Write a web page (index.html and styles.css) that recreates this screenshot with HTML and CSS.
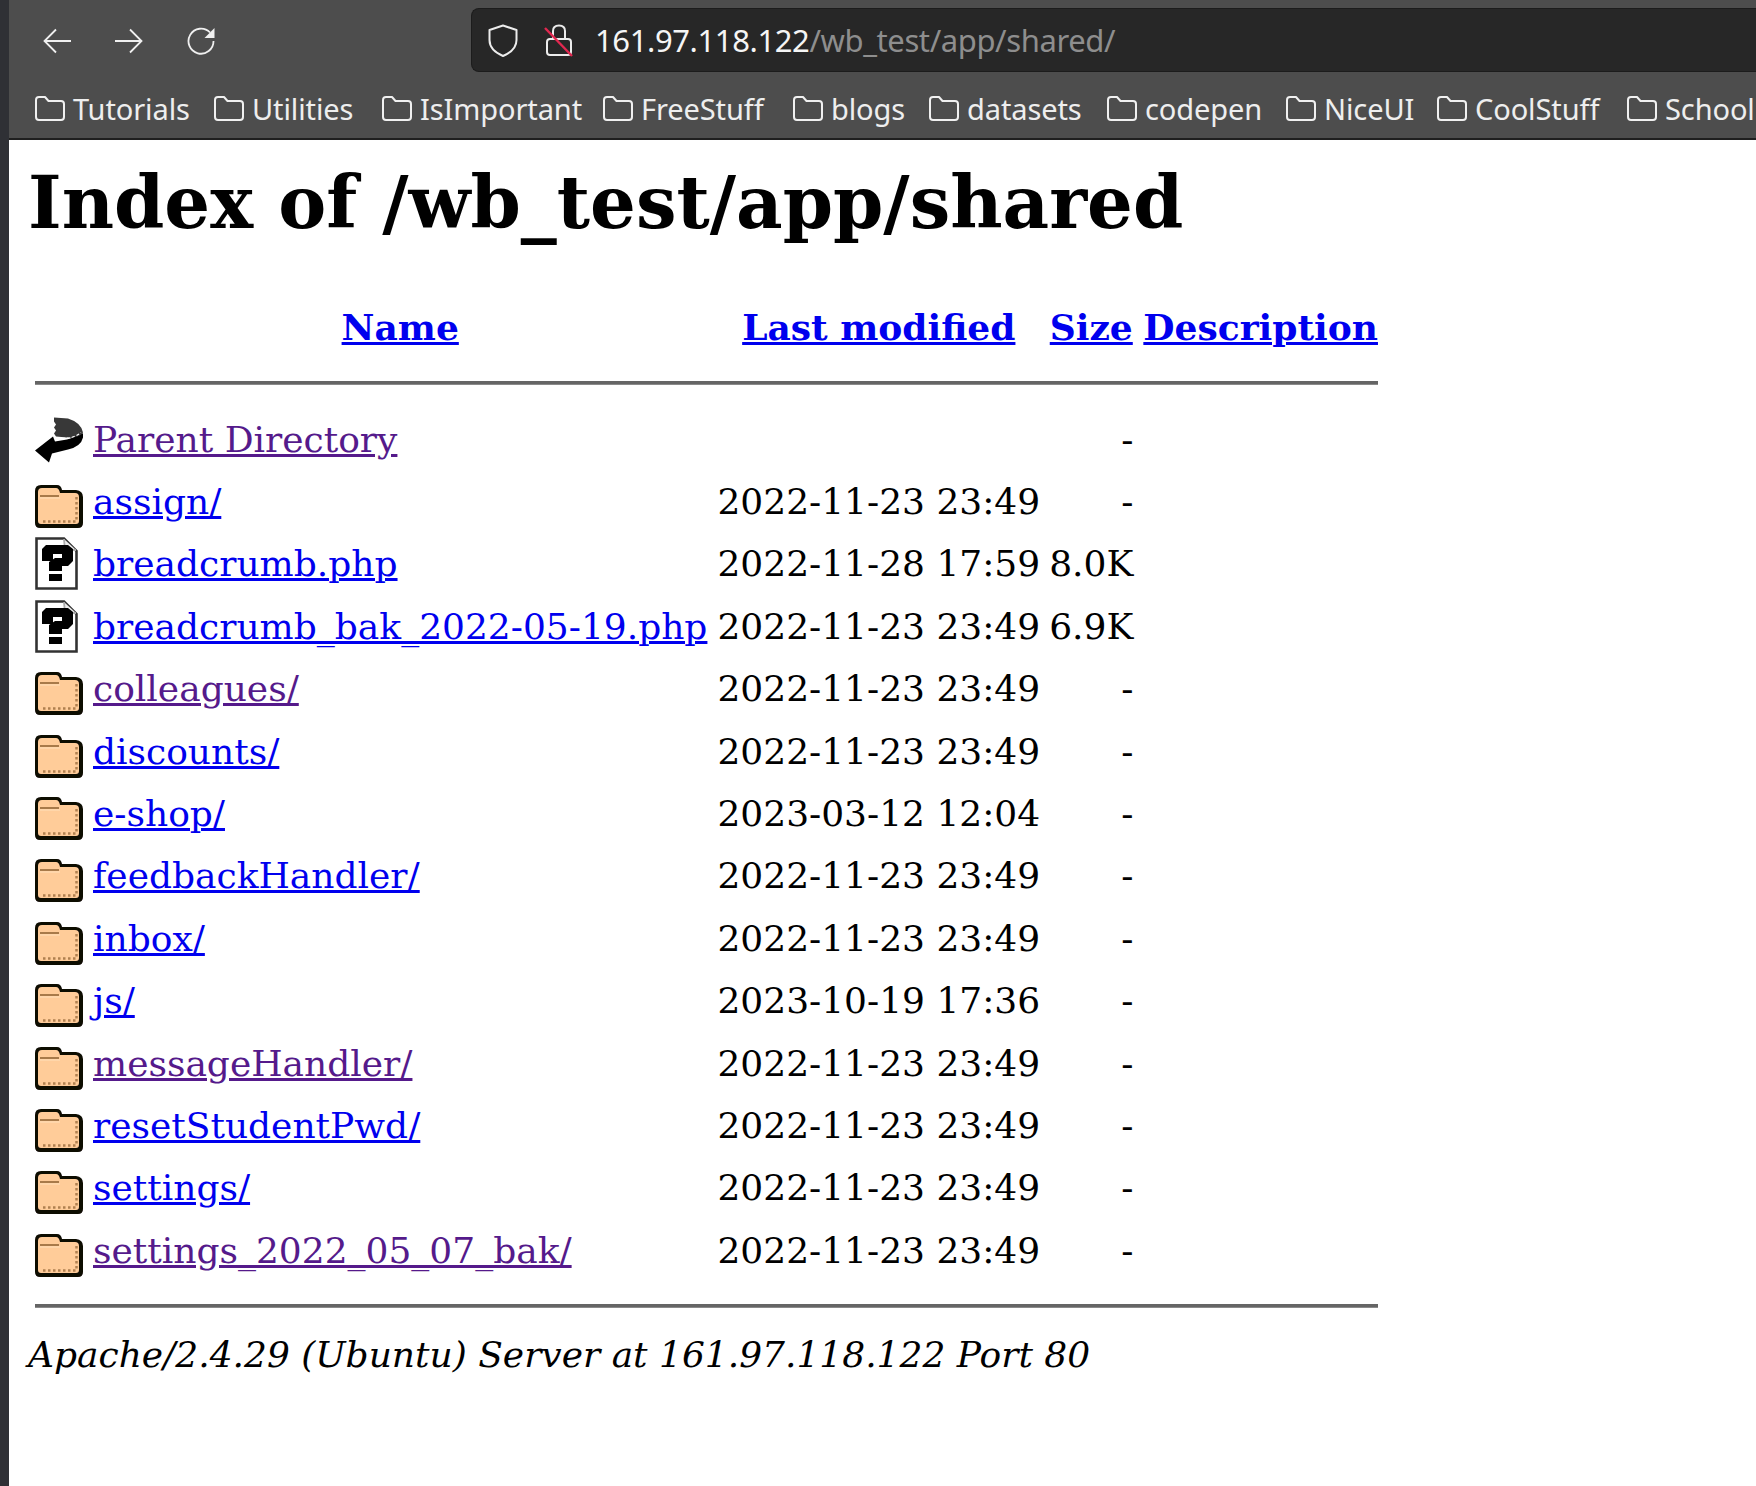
FILE: index.html
```html
<!DOCTYPE html>
<html lang="en">
<head>
<meta charset="utf-8">
<title>Index of /wb_test/app/shared</title>
<link rel="stylesheet" href="styles.css">
</head>
<body>
<svg class="defs" width="0" height="0" aria-hidden="true">
  <defs>
    <filter id="soft" x="-5%" y="-5%" width="110%" height="110%"><feGaussianBlur stdDeviation="0.5"/></filter>
    <symbol id="bm" viewBox="0 0 30 25"><path d="M1 4C1 2 2 1 4 1H10L13.500 5H26C28 5 29 6 29 8V21C29 23 28 24 26 24H4C2 24 1 23 1 21Z" fill="none" stroke="#f0f0f0" stroke-width="2" stroke-linejoin="round"/></symbol>
    <symbol id="folder" viewBox="0 0 48 43" preserveAspectRatio="xMidYMax meet">
      <g filter="url(#soft)">
        <path d="M0 6Q0 0 6 0H22Q26 0 27 5H41Q48 6 48 12V38Q48 43 43 43H5Q0 43 0 38Z" fill="#0c0806"/>
        <path d="M3 7Q3 3 7 3H21Q24 3 25 8H40Q44 8 44 12V36Q44 39 41 39H6Q3 39 3 36Z" fill="#ffcc99"/>
        <path d="M5 11H24" stroke="#a87a48" stroke-width="2"/>
        <path d="M5 13H25" stroke="#ffe0bb" stroke-width="1"/>
        <path d="M8 36.500H42" stroke="#b08050" stroke-width="2.500" stroke-dasharray="2.500 2.500"/>
        <path d="M41.500 12V36" stroke="#b08050" stroke-width="2.500" stroke-dasharray="2.500 2.500"/>
      </g>
    </symbol>
    <symbol id="unknown" viewBox="0 0 43 53" preserveAspectRatio="xMinYMid meet">
      <g filter="url(#soft)">
        <path d="M1.500 1.500H29L41.500 14V51.500H1.500Z" fill="#fff" stroke="#333" stroke-width="2.600"/>
        <path d="M29 2L30 13H41" fill="#eee" stroke="#aaa" stroke-width="1.800"/>
        <path d="M7 12L11 8H33L38 12V24L33 29H27V34H14V25L20 21H27V17H18V24H7Z" fill="#000"/>
        <rect x="14" y="37" width="13" height="7" fill="#000"/>
      </g>
    </symbol>
    <symbol id="back" viewBox="0 0 48 48">
      <g filter="url(#soft)">
        <path d="M0 35L18 21L20 26L32 24Q41 22 44 17L48 18V22Q46 31 33 34L17 38L14 47Z" fill="#000"/>
        <path d="M19 2L33 3Q46 7 48 17Q44 23 32 22L21 21L19 18L21 15L19 12L21 9L19 6Z" fill="#383838"/>
        <path d="M22 22Q36 25 46 17" fill="none" stroke="#fff" stroke-width="1.200" stroke-dasharray="3 2"/>
      </g>
    </symbol>
  </defs>
</svg>
<div class="window">
  <div class="edge"></div>
  <div class="main">
    <header class="chrome">
      <div class="toolbar">
        <div class="navs">
          <svg class="nav" viewBox="0 0 28 28"><path d="M28 14H2M13 2.500L1.500 14L13 25.500" fill="none" stroke="#f0f0f0" stroke-width="1.800"/></svg>
          <svg class="nav" viewBox="0 0 28 28"><path d="M0 14H26M15 2.500L26.500 14L15 25.500" fill="none" stroke="#f0f0f0" stroke-width="1.800"/></svg>
          <svg class="nav" viewBox="0 0 28 28"><path d="M23 5.500A12.500 12.500 0 1 0 26.500 14" fill="none" stroke="#f0f0f0" stroke-width="1.800"/><path d="M27.500 1V11H17.500Z" fill="#f0f0f0"/></svg>
        </div>
        <div class="urlbar">
          <svg class="shield" viewBox="0 0 30 33"><path d="M15 1.500L28.500 6V16C28.500 24 22 29 15 32C8 29 1.500 24 1.500 16V6Z" fill="none" stroke="#ececec" stroke-width="2" stroke-linejoin="round"/></svg>
          <svg class="lock" viewBox="0 0 30 33"><path d="M9 15V7C9 3 11.500 1.500 15 1.500S21 3 21 7V15" fill="none" stroke="#ececec" stroke-width="2"/><rect x="3" y="15" width="24" height="16" rx="3" fill="none" stroke="#ececec" stroke-width="2"/><path d="M1 4L28 32" stroke="#e22850" stroke-width="2.400"/></svg>
          <span class="url"><span class="host">161.97.118.122</span>/wb_test/app/shared/</span>
        </div>
      </div>
      <nav class="bookmarks">
        <span class="bm"><svg><use href="#bm"/></svg>Tutorials</span>
        <span class="bm"><svg><use href="#bm"/></svg>Utilities</span>
        <span class="bm"><svg><use href="#bm"/></svg>IsImportant</span>
        <span class="bm"><svg><use href="#bm"/></svg>FreeStuff</span>
        <span class="bm"><svg><use href="#bm"/></svg>blogs</span>
        <span class="bm"><svg><use href="#bm"/></svg>datasets</span>
        <span class="bm"><svg><use href="#bm"/></svg>codepen</span>
        <span class="bm"><svg><use href="#bm"/></svg>NiceUI</span>
        <span class="bm"><svg><use href="#bm"/></svg>CoolStuff</span>
        <span class="bm"><svg><use href="#bm"/></svg>School</span>
      </nav>
    </header>
    <main class="page">
      <h1>Index of /wb_test/app/shared</h1>
      <table>
        <tr class="head"><th class="ic"></th><th><a href="#">Name</a></th><th><a href="#">Last modified</a></th><th><a href="#">Size</a></th><th><a href="#">Description</a></th></tr>
        <tr><th colspan="5" class="rule"><hr></th></tr>
        <tr><td class="ic"><svg class="i"><use href="#back"/></svg></td><td><a class="v" href="#">Parent Directory</a></td><td></td><td class="r">-</td><td></td></tr>
        <tr><td class="ic"><svg class="i"><use href="#folder"/></svg></td><td><a href="#">assign/</a></td><td>2022-11-23 23:49</td><td class="r">-</td><td></td></tr>
        <tr><td class="ic"><svg class="i"><use href="#unknown"/></svg></td><td><a href="#">breadcrumb.php</a></td><td>2022-11-28 17:59</td><td class="r">8.0K</td><td></td></tr>
        <tr><td class="ic"><svg class="i"><use href="#unknown"/></svg></td><td><a href="#">breadcrumb_bak_2022-05-19.php</a></td><td>2022-11-23 23:49</td><td class="r">6.9K</td><td></td></tr>
        <tr><td class="ic"><svg class="i"><use href="#folder"/></svg></td><td><a class="v" href="#">colleagues/</a></td><td>2022-11-23 23:49</td><td class="r">-</td><td></td></tr>
        <tr><td class="ic"><svg class="i"><use href="#folder"/></svg></td><td><a href="#">discounts/</a></td><td>2022-11-23 23:49</td><td class="r">-</td><td></td></tr>
        <tr><td class="ic"><svg class="i"><use href="#folder"/></svg></td><td><a href="#">e-shop/</a></td><td>2023-03-12 12:04</td><td class="r">-</td><td></td></tr>
        <tr><td class="ic"><svg class="i"><use href="#folder"/></svg></td><td><a href="#">feedbackHandler/</a></td><td>2022-11-23 23:49</td><td class="r">-</td><td></td></tr>
        <tr><td class="ic"><svg class="i"><use href="#folder"/></svg></td><td><a href="#">inbox/</a></td><td>2022-11-23 23:49</td><td class="r">-</td><td></td></tr>
        <tr><td class="ic"><svg class="i"><use href="#folder"/></svg></td><td><a href="#">js/</a></td><td>2023-10-19 17:36</td><td class="r">-</td><td></td></tr>
        <tr><td class="ic"><svg class="i"><use href="#folder"/></svg></td><td><a class="v" href="#">messageHandler/</a></td><td>2022-11-23 23:49</td><td class="r">-</td><td></td></tr>
        <tr><td class="ic"><svg class="i"><use href="#folder"/></svg></td><td><a href="#">resetStudentPwd/</a></td><td>2022-11-23 23:49</td><td class="r">-</td><td></td></tr>
        <tr><td class="ic"><svg class="i"><use href="#folder"/></svg></td><td><a href="#">settings/</a></td><td>2022-11-23 23:49</td><td class="r">-</td><td></td></tr>
        <tr><td class="ic"><svg class="i"><use href="#folder"/></svg></td><td><a class="v" href="#">settings_2022_05_07_bak/</a></td><td>2022-11-23 23:49</td><td class="r">-</td><td></td></tr>
        <tr><th colspan="5" class="rule"><hr></th></tr>
      </table>
      <address>Apache/2.4.29 (Ubuntu) Server at 161.97.118.122 Port 80</address>
    </main>
  </div>
</div>
</body>
</html>
```
FILE: styles.css
```css
html, body { margin: 0; padding: 0; height: 100%; background: #fff; overflow: hidden; }
.defs { position: absolute; }
.window { display: flex; height: 1486px; width: 1756px; overflow: hidden; }
.edge { width: 9px; flex: none; background: #2f3035; }
.main { flex: 1; min-width: 0; display: flex; flex-direction: column; }
.chrome { background: #4d4d4d; border-bottom: 2px solid #1f1f1f; height: 140px; box-sizing: border-box; overflow: hidden; flex: none; }
.toolbar { display: flex; align-items: center; height: 80px; }
.navs { display: flex; gap: 44px; padding: 2px 0 0 34px; width: 462px; box-sizing: border-box; flex: none; }
.nav { width: 28px; height: 28px; flex: none; }
.urlbar { flex: 1; height: 64px; background: #272727; border: 1px solid #1c1c1c; border-right: 0; border-radius: 8px 0 0 8px; display: flex; align-items: center; box-sizing: border-box; padding-left: 16px; }
.shield { width: 30px; height: 33px; flex: none; margin-right: 26px; }
.lock { width: 30px; height: 33px; flex: none; margin-right: 21px; }
.url { font: 31px "Noto Sans", "Open Sans", sans-serif; letter-spacing: -0.4px; color: #8e8e8e; white-space: nowrap; }
.host { color: #f5f5f5; }
.bookmarks { display: grid; grid-template-columns: 179px 168px 221px 190px 136px 178px 179px 151px 190px 1fr; align-items: center; height: 58px; padding: 0 0 2px 26px; box-sizing: border-box; white-space: nowrap; }
.bm { display: flex; align-items: center; gap: 8px; color: #eeeeee; font: 29px "Noto Sans", "Open Sans", sans-serif; letter-spacing: -0.1px; min-width: 0; }
.bm svg { width: 30px; height: 25px; flex: none; }
.page { flex: 1; font-family: "DejaVu Serif", serif; font-size: 36px; color: #000; padding: 0 19px; line-height: normal; }
h1 { font-size: 72px; font-weight: bold; margin: 21px 0 51px; line-height: 84px; white-space: nowrap; }
table { border-collapse: separate; border-spacing: 9px 0; margin-left: -2px; }
th { font-weight: bold; padding: 0; white-space: nowrap; text-align: center; }
td { padding: 0; white-space: nowrap; height: 62.4px; vertical-align: middle; }
tr > :nth-child(2):not(.rule), tr > :nth-child(4) { padding-right: 1px; }
.head th { height: 62px; }
.rule { height: 50px; }
hr { border: 0; height: 4px; background: linear-gradient(#656565 75%, #8a8a8a 75%); margin: 0; }
a { color: #0000ee; text-decoration: underline; }
a.v { color: #551a8b; }
.ic { width: 49px; }
.i { width: 48px; height: 53px; display: block; }
.r { text-align: right; }
address { font-style: italic; margin-top: 3px; white-space: nowrap; }
```
